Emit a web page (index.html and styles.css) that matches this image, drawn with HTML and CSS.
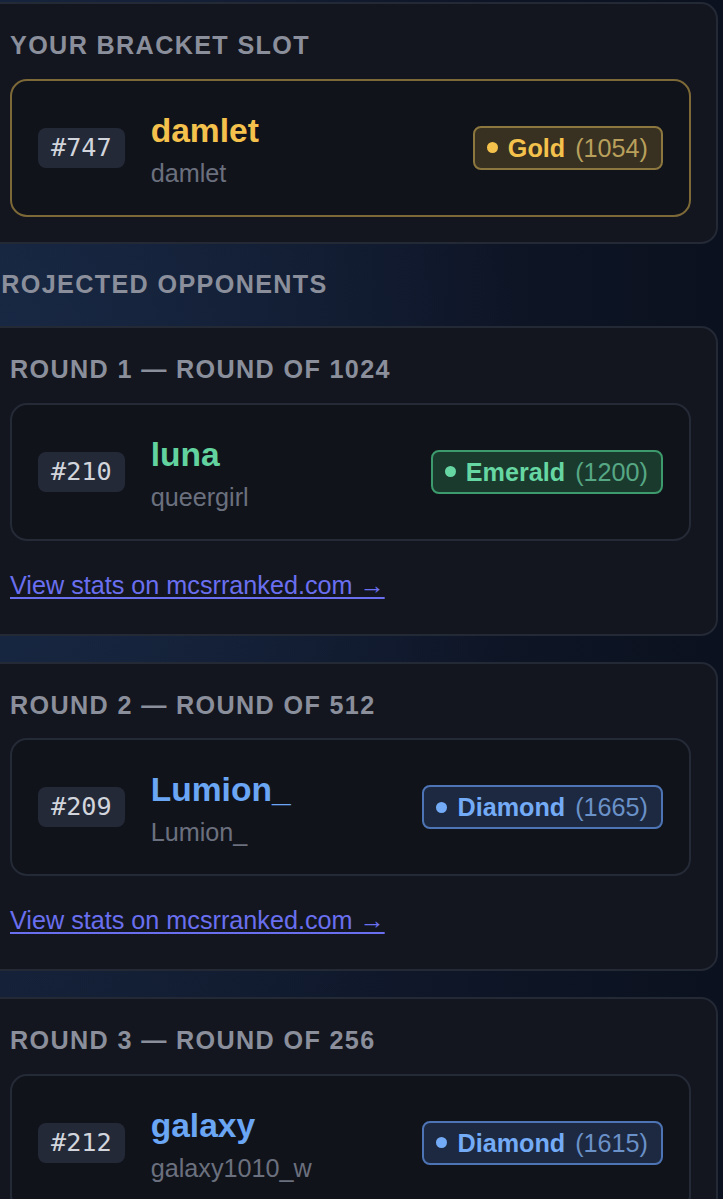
FILE: index.html
```html
<!DOCTYPE html>
<html lang="en">
<head>
<meta charset="utf-8">
<title>Bracket</title>
<link rel="stylesheet" href="styles.css">
</head>
<body>
<div class="page">
  <section class="panel">
    <div class="label">Your bracket slot</div>
    <div class="card card-gold">
      <span class="seed">#747</span>
      <div class="who">
        <span class="name gold">damlet</span>
        <span class="user">damlet</span>
      </div>
      <span class="pill pill-gold"><span class="dot"></span><b>Gold</b><span class="elo">(1054)</span></span>
    </div>
  </section>

  <div class="heading">Projected opponents</div>

  <div class="rounds">
    <section class="panel">
      <div class="label">Round 1 — Round of 1024</div>
      <div class="card">
        <span class="seed">#210</span>
        <div class="who">
          <span class="name emerald">luna</span>
          <span class="user">queergirl</span>
        </div>
        <span class="pill pill-emerald"><span class="dot"></span><b>Emerald</b><span class="elo">(1200)</span></span>
      </div>
      <div class="linkrow"><a class="stats" href="#">View stats on mcsrranked.com →</a></div>
    </section>

    <section class="panel">
      <div class="label">Round 2 — Round of 512</div>
      <div class="card">
        <span class="seed">#209</span>
        <div class="who">
          <span class="name diamond">Lumion_</span>
          <span class="user">Lumion_</span>
        </div>
        <span class="pill pill-diamond"><span class="dot"></span><b>Diamond</b><span class="elo">(1665)</span></span>
      </div>
      <div class="linkrow"><a class="stats" href="#">View stats on mcsrranked.com →</a></div>
    </section>

    <section class="panel">
      <div class="label">Round 3 — Round of 256</div>
      <div class="card">
        <span class="seed">#212</span>
        <div class="who">
          <span class="name diamond">galaxy</span>
          <span class="user">galaxy1010_w</span>
        </div>
        <span class="pill pill-diamond"><span class="dot"></span><b>Diamond</b><span class="elo">(1615)</span></span>
      </div>
      <div class="linkrow"><a class="stats" href="#">View stats on mcsrranked.com →</a></div>
    </section>
  </div>
</div>
</body>
</html>
```

FILE: styles.css
```css
html, body {
  margin: 0;
  padding: 0;
}

body {
  width: 723px;
  height: 1199px;
  overflow: hidden;
  font-family: "Liberation Sans", Arial, sans-serif;
  background:
    radial-gradient(ellipse 520px 900px at 0% 35%, rgba(30, 50, 85, 0.55), rgba(30, 50, 85, 0) 100%),
    linear-gradient(90deg, #121d31 0%, #0f1729 55%, #0b111e 100%);
}

.page {
  margin-left: -17px;
  margin-top: 2px;
  width: 735px;
  display: flex;
  flex-direction: column;
}

.panel {
  box-sizing: border-box;
  border: 2px solid #242936;
  border-radius: 17px;
  background: #13161f;
  padding: 25px;
  display: flex;
  flex-direction: column;
}

.label,
.heading {
  font-size: 25.2px;
  line-height: 33.6px;
  font-weight: 700;
  letter-spacing: 1.35px;
  text-transform: uppercase;
  color: #8a8f9b;
}

.heading {
  margin: 24px 0 25px 0;
}

.rounds {
  display: flex;
  flex-direction: column;
  gap: 26px;
}

.card {
  margin-top: 16px;
  box-sizing: border-box;
  border: 2px solid #252a37;
  border-radius: 17px;
  background: #11131b;
  padding: 25px 26px;
  display: flex;
  align-items: center;
  gap: 26px;
}

.card-gold {
  border-color: #7d6937;
}

.seed {
  font-family: "DejaVu Sans Mono", "Liberation Mono", monospace;
  font-size: 25.2px;
  line-height: 34px;
  padding: 3px 13px;
  border-radius: 8px;
  background: #242938;
  color: #d2d5dc;
}

.who {
  display: flex;
  flex-direction: column;
}

.name {
  font-size: 33.6px;
  line-height: 50px;
  font-weight: 700;
}

.gold { color: #f4c24c; }
.emerald { color: #62d39f; }
.diamond { color: #6aa6f4; }

.user {
  font-size: 25.2px;
  line-height: 34px;
  color: #6b707e;
}

.pill {
  margin-left: auto;
  display: flex;
  align-items: center;
  gap: 10px;
  padding: 3px 13px 3px 12px;
  border: 2px solid;
  border-radius: 8px;
  font-size: 25.2px;
  line-height: 34px;
}

.pill b {
  font-weight: 700;
}

.dot {
  width: 11px;
  height: 11px;
  border-radius: 50%;
  background: currentColor;
}

.pill-gold {
  color: #f4c24c;
  background: #383020;
  border-color: #8c773e;
}
.pill-gold .elo { color: #b8a05c; }

.pill-emerald {
  color: #66d6a2;
  background: #1b3a2e;
  border-color: #3d9a6c;
}
.pill-emerald .elo { color: #56a784; }

.pill-diamond {
  color: #74abf6;
  background: #1d2941;
  border-color: #4d74b4;
}
.pill-diamond .elo { color: #6a91c8; }

.linkrow {
  margin-top: 23px;
  margin-bottom: -1px;
  line-height: 42px;
}

.stats {
  font-size: 25.2px;
  color: #6a6ff0;
  text-decoration: underline;
  text-decoration-thickness: 2px;
  text-underline-offset: 3px;
}
```
